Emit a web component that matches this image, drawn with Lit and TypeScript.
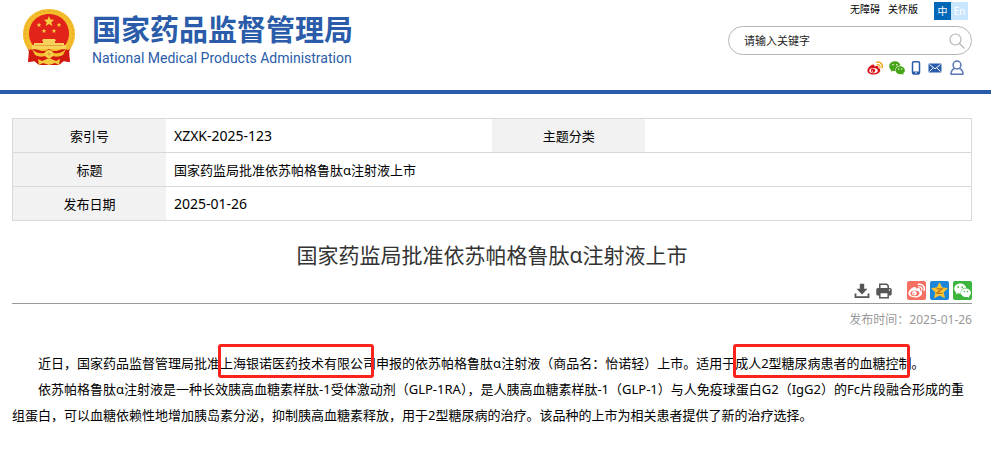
import { LitElement, html, css, svg } from "lit";
import { customElement } from "lit/decorators.js";

const starPoints = (cx: number, cy: number, r: number): string =>
  Array.from({ length: 10 }, (_, i) => {
    const a = (Math.PI / 5) * i - Math.PI / 2;
    const q = i % 2 ? r * 0.45 : r;
    return `${(cx + q * Math.cos(a)).toFixed(2)},${(cy + q * Math.sin(a)).toFixed(2)}`;
  }).join(" ");

const star = (cx: number, cy: number, r: number, fill = "#f7cf3f") =>
  svg`<polygon points=${starPoints(cx, cy, r)} fill=${fill}></polygon>`;

const emblem = html`<svg class="emblem" viewBox="0 0 54 58" aria-hidden="true">
  <path d="M5 39L8 46 6 54 13 53 17 57H37L41 53 48 54 46 46 49 39z" fill="#cf1510"></path>
  <path d="M27 1C12 1 1 12 1 26c0 8 3 13 7 17h38c4-4 7-9 7-17C53 12 42 1 27 1z" fill="#f3bd2c"></path>
  <path d="M27 3C13 3 3 13 3 26c0 6 2 11 5 15" fill="none" stroke="#e6a824" stroke-dasharray="2 2"></path>
  <path d="M27 3c14 0 24 10 24 23 0 6-2 11-5 15" fill="none" stroke="#e6a824" stroke-dasharray="2 2"></path>
  <path d="M27 6C15 6 7 15 7 26c0 6 3 11 7 15h26c4-4 7-9 7-15C47 15 39 6 27 6z" fill="#e2231a"></path>
  ${star(27, 13.5, 5.5)} ${star(17, 17, 2.4)} ${star(37, 17, 2.4)} ${star(22, 23, 2.4)} ${star(32, 23, 2.4)}
  <path d="M21 31h12l1 2h-1v2h9v2h2v4H10v-4h2v-2h9v-2h-1z" fill="#f8d35c"></path>
  <path d="M13 37.500h28" stroke="#e9a23a"></path>
  <path d="M7 42c6-2 11 0 14 2l6-3 6 3c3-2 8-4 14-2l1 12-6-1-4 3-7-1-4 2-4-2-7 1-4-3-6 1z" fill="#d2190f"></path>
  <path d="M10 41c4 4 8 5 12 4l5-3 5 3c4 1 8 0 12-4l-3 6c-4 2-7 2-10 1l-4 2-4-2c-3 1-6 1-10-1z" fill="#f4bf31"></path>
  <path d="M16 51l4 2 7-3 7 3 4-2-1 6-4-2-6 2-6-2-4 2z" fill="#f4c93e"></path>
  <circle cx="27" cy="46" r="4" fill="#f7d04a"></circle>
  <circle cx="27" cy="46" r="1.5" fill="#e9a23a"></circle>
</svg>`;

const weibo = (body: string, wave: string, hole: string) => html`<svg viewBox="0 0 16 16" aria-hidden="true">
  <path d="M6.2 4.600C3.400 5 .4 8.200.4 10.700.4 13 3.300 14.600 6.500 14.600c4 0 6.800-2.200 6.800-4.300 0-1.300-1-2-2-2.300.5-1.300-.1-2.300-1.300-2.300-.9 0-1.800.4-2.600.7.2-1.100 0-1.900-1.200-1.800z" fill=${body}></path>
  <ellipse cx="6.500" cy="10.600" rx="4.200" ry="2.700" fill=${hole}></ellipse>
  <circle cx="6" cy="10.600" r="2.200" fill=${body}></circle>
  <circle cx="5.400" cy="11.100" r=".7" fill=${hole}></circle>
  <path d="M10.200 4.700c2-.4 3.300 1 2.800 2.900" fill="none" stroke=${wave} stroke-width="1.200" stroke-linecap="round"></path>
  <path d="M9.900 2.200c3.600-.6 6.200 2.300 5.300 5.600" fill="none" stroke=${wave} stroke-width="1.500" stroke-linecap="round"></path>
</svg>`;

const wechat = (fill: string, eye: string) => html`<svg viewBox="0 0 16 16" aria-hidden="true">
  <path d="M6 1.300C2.700 1.300.2 3.500.2 6.200c0 1.500.7 2.800 2 3.700l-.5 1.900 2.200-1.100c.7.2 1.400.3 2.100.3h.4c-.6-3.200 2-5.600 5.200-5.500C11 3 8.800 1.300 6 1.300z" fill=${fill}></path>
  <path d="M11.200 6.200c-2.600 0-4.700 1.800-4.700 4s2.100 4 4.700 4c.5 0 1.100-.1 1.600-.2l1.700.9-.4-1.500c1.100-.8 1.800-1.900 1.800-3.200 0-2.200-2.100-4-4.700-4z" fill=${fill}></path>
  <circle cx="4" cy="4.800" r=".8" fill=${eye}></circle><circle cx="7.800" cy="4.800" r=".8" fill=${eye}></circle>
  <circle cx="9.700" cy="9" r=".7" fill=${eye}></circle><circle cx="12.700" cy="9" r=".7" fill=${eye}></circle>
</svg>`;

const phone = html`<svg class="narrow" viewBox="0 0 10 16" aria-hidden="true">
  <rect x="1.500" y="1.700" width="7" height="12" rx="1.200" fill="#fff" stroke="#2a5caa" stroke-width="1.500"></rect>
  <path d="M1.500 11.500h7v2a1 1 0 0 1-1 1h-5a1 1 0 0 1-1-1z" fill="#2a5caa"></path>
  <circle cx="5" cy="12.800" r=".7" fill="#fff"></circle>
</svg>`;

const mail = html`<svg viewBox="0 0 16 16" aria-hidden="true">
  <rect x="1.500" y="3.500" width="13" height="9" rx="1" fill="#2a5caa"></rect>
  <path d="M2.500 4.500L8 8.800l5.500-4.300M2.500 11.500l3.500-3.500M13.500 11.500L10 8" fill="none" stroke="#fff"></path>
</svg>`;

const user = html`<svg viewBox="0 0 16 16" aria-hidden="true">
  <circle cx="8" cy="5" r="3.900" fill="none" stroke="#5b77b8" stroke-width="1.500"></circle>
  <path d="M5.500 8.500C3 9.500 2 11.500 2 14.200h12c0-2.700-1-4.700-3.500-5.700" fill="none" stroke="#5b77b8" stroke-width="1.500" stroke-linejoin="round"></path>
</svg>`;

const search = html`<svg viewBox="0 0 16 16" aria-hidden="true">
  <circle cx="6.500" cy="6.500" r="5.500" fill="none" stroke="#b5b5b5" stroke-width="1.200"></circle>
  <path d="M10.500 10.500l4.500 4.500" stroke="#b5b5b5" stroke-width="1.300" stroke-linecap="round"></path>
</svg>`;

const download = html`<svg viewBox="0 0 16 16" aria-hidden="true">
  <path d="M5.800 0.800h4.400v5h3.300L8 11.500 2.500 5.800h3.300z" fill="#555"></path>
  <path d="M1.500 10.500v3.700h13v-3.700" fill="none" stroke="#555" stroke-width="1.800"></path>
</svg>`;

const printer = html`<svg viewBox="0 0 16 16" aria-hidden="true">
  <path d="M3.800 5V1.300h7L12.200 2.800V5" fill="#fff" stroke="#555" stroke-width="1.500"></path>
  <rect x=".3" y="5" width="15.400" height="7.500" rx="1.500" fill="#555"></rect>
  <rect x="3.800" y="9.500" width="8.400" height="5.300" fill="#fff" stroke="#555" stroke-width="1.500"></rect>
  <circle cx="13.500" cy="7" r=".8" fill="#fff"></circle>
</svg>`;

const qzone = html`<svg viewBox="0 0 20 20" aria-hidden="true">
  <path d="M10 1l2.700 5.900 6.500.7-4.800 4.400 1.300 6.400L10 15.200l-5.700 3.200 1.300-6.400L.8 7.600l6.500-.7z" fill="#fec52e" stroke="#fec52e" stroke-linejoin="round"></path>
  <path d="M6.500 8h6.500l-6 5c2 .5 4 .5 6.500 0" fill="none" stroke="#b9761c" stroke-width="1.500"></path>
</svg>`;

@customElement("app-root")
export class AppRoot extends LitElement {
  static styles = css`
    :host {
      display: block;
      color: #000;
      background: #fff;
      font: 13px/26px "Noto Sans", "Noto Sans CJK SC", sans-serif;
    }
    * { box-sizing: border-box; }
    a { color: inherit; text-decoration: none; }
    svg { display: block; width: 16px; height: 16px; }
    button { padding: 0; border: 0; background: none; font: inherit; cursor: pointer; }
    .header {
      display: flex;
      justify-content: space-between;
      height: 94px;
      padding: 0 19px 0 22px;
      border-bottom: 4px solid #2a5caa;
    }
    .brand { display: flex; gap: 16px; padding-top: 8px; color: #2a5caa; }
    .emblem { width: 54px; height: 58px; }
    .brand-name { display: block; font: 700 29px/40px "Noto Sans CJK SC", sans-serif; }
    .brand-en { display: block; font: 400 14px/20px Roboto, sans-serif; }
    .tools { display: flex; flex-direction: column; align-items: flex-end; width: 244px; }
    .links { display: flex; gap: 8px; height: 20px; padding-right: 4px; font-size: 10px; line-height: 18px; }
    .langs { display: flex; margin-left: 8px; padding-top: 2px; }
    .lang { width: 17px; height: 18px; text-align: center; color: #fff; background: #c9e6ff; }
    .lang.current { background: #0068b7; }
    .search {
      display: flex;
      align-items: center;
      width: 100%;
      height: 29px;
      margin-top: 6px;
      padding: 0 6px 0 15px;
      border: 1px solid #b5b5b5;
      border-radius: 15px;
    }
    .search input {
      flex: 1;
      min-width: 0;
      padding: 0;
      border: 0;
      outline: 0;
      background: none;
      font: 11px/20px "Noto Sans", "Noto Sans CJK SC", sans-serif;
    }
    .search input::placeholder { color: #222; opacity: 1; }
    .social { display: flex; gap: 6px; padding: 5px 7px 0 0; }
    .social .narrow { width: 10px; }
    .main { padding: 24px 19px 0 12px; }
    .info { width: 100%; table-layout: fixed; border-collapse: collapse; line-height: 20px; }
    .info tr { height: 34px; border: 1px solid #d9d9d9; }
    .info th { width: 16%; padding: 0; font-weight: 400; background: #f2f2f2; }
    .info td { padding: 0 8px; }
    .latin { font-size: 14px; }
    .title { margin: 18px 0 0; font-size: 21px; line-height: 32px; font-weight: 400; text-align: center; color: #333; }
    .share { display: flex; justify-content: flex-end; align-items: center; gap: 4px; padding: 10px 0 3px; border-bottom: 1px solid #999; }
    .share .plain { padding: 0 1px; }
    .share .tile { padding: 1px; border-radius: 2px; }
    .tile svg { width: 17px; height: 17px; }
    .red { background: #f56f63; margin-left: 10px; }
    .blue { background: #1c86d8; }
    .green { background: #3cb53c; }
    .date { margin: 6px 0 0; font-size: 12px; line-height: 20px; text-align: right; color: #999; }
    .article { margin-top: 20px; }
    .article p { margin: 0; text-indent: 26px; }
    .boxed { position: relative; text-indent: 0; }
    .boxed::after {
      content: "";
      position: absolute;
      inset: -10px 2px -6px -2px;
      border: 3px solid #fb241c;
      border-radius: 3px;
    }
  `;

  render() {
    return html`
      <header class="header">
        <a class="brand" href="#">
          ${emblem}
          <span>
            <span class="brand-name">国家药品监督管理局</span>
            <span class="brand-en">National Medical Products Administration</span>
          </span>
        </a>
        <div class="tools">
          <nav class="links">
            <a href="#">无障碍</a>
            <a href="#">关怀版</a>
            <span class="langs"><a class="lang current" href="#">中</a><a class="lang" href="#">En</a></span>
          </nav>
          <form class="search" role="search">
            <input type="text" aria-label="请输入关键字" placeholder="请输入关键字" />
            <button type="button" aria-label="搜索">${search}</button>
          </form>
          <nav class="social">
            <a href="#" aria-label="微博">${weibo("#d8151b", "#f2a51f", "#fff")}</a>
            <a href="#" aria-label="微信">${wechat("#45a516", "#fff")}</a>
            <a href="#" aria-label="手机">${phone}</a>
            <a href="#" aria-label="邮箱">${mail}</a>
            <a href="#" aria-label="用户">${user}</a>
          </nav>
        </div>
      </header>
      <main class="main">
        <table class="info">
          <tbody>
            <tr>
              <th scope="row">索引号</th>
              <td class="latin">XZXK-2025-123</td>
              <th scope="row">主题分类</th>
              <td></td>
            </tr>
            <tr>
              <th scope="row">标题</th>
              <td colspan="3">国家药监局批准依苏帕格鲁肽α注射液上市</td>
            </tr>
            <tr>
              <th scope="row">发布日期</th>
              <td class="latin" colspan="3">2025-01-26</td>
            </tr>
          </tbody>
        </table>
        <h1 class="title">国家药监局批准依苏帕格鲁肽α注射液上市</h1>
        <div class="share">
          <button class="plain" type="button" aria-label="下载">${download}</button>
          <button class="plain" type="button" aria-label="打印">${printer}</button>
          <button class="tile red" type="button" aria-label="分享到微博">${weibo("#fff", "#fff", "#f56f63")}</button>
          <button class="tile blue" type="button" aria-label="分享到QQ空间">${qzone}</button>
          <button class="tile green" type="button" aria-label="分享到微信">${wechat("#fff", "#3cb53c")}</button>
        </div>
        <p class="date">发布时间：2025-01-26</p>
        <article class="article">
          <p>近日，国家药品监督管理局批准<span class="boxed">上海银诺医药技术有限公司</span>申报的依苏帕格鲁肽α注射液（商品名：怡诺轻）上市。适用于<span class="boxed">成人2型糖尿病患者的血糖控制</span>。</p>
          <p>依苏帕格鲁肽α注射液是一种长效胰高血糖素样肽-1受体激动剂（GLP-1RA），是人胰高血糖素样肽-1（GLP-1）与人免疫球蛋白G2（IgG2）的Fc片段融合形成的重组蛋白，可以血糖依赖性地增加胰岛素分泌，抑制胰高血糖素释放，用于2型糖尿病的治疗。该品种的上市为相关患者提供了新的治疗选择。</p>
        </article>
      </main>
    `;
  }
}
